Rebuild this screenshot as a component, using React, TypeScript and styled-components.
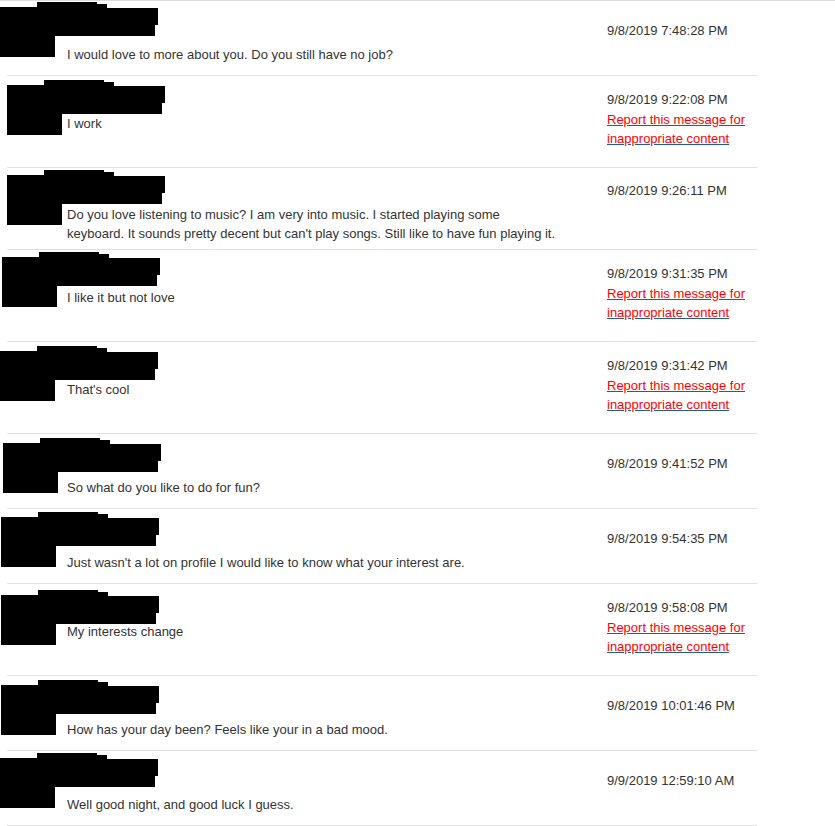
import React from "react";
import styled, { createGlobalStyle } from "styled-components";

type Variant = "plain" | "flagged" | "long";

interface Message {
  text: string;
  date: string;
  variant: Variant;
  flagged?: boolean;
  redact: { x: number; y: number };
}

const GlobalStyle = createGlobalStyle`
  html, body {
    margin: 0;
    padding: 0;
    background: #ffffff;
  }
  body {
    font-family: "Liberation Sans", Arial, sans-serif;
    font-size: 13px;
    color: #333333;
  }
`;

const sizes: Record<Variant, { pad: number; h: number }> = {
  plain: { pad: 20, h: 75 },
  flagged: { pad: 14, h: 92 },
  long: { pad: 13, h: 82 },
};

export const MessageList = styled.div`
  border-top: 1px solid #dcdcdc;
  width: 835px;
`;

export const MessageRow = styled.div<{ $variant: Variant }>`
  position: relative;
  display: flex;
  box-sizing: border-box;
  margin-left: 7px;
  width: 750px;
  min-height: ${(p) => sizes[p.$variant].h}px;
  padding-top: ${(p) => sizes[p.$variant].pad}px;
  border-bottom: 1px solid #e1e1e1;
`;

export const MessageBody = styled.div`
  flex: 1;
  padding-left: 60px;
`;

export const SenderName = styled.div`
  height: 24px;
`;

export const MessageText = styled.p`
  margin: 0;
  line-height: 19px;
  white-space: pre-line;
`;

export const MetaColumn = styled.div`
  width: 150px;
  line-height: 19.5px;
`;

export const DateText = styled.div`
  white-space: nowrap;
`;

export const ReportLink = styled.a`
  display: block;
  color: #ff0000;
  text-decoration: underline;
  text-decoration-color: #1d6283;
  cursor: pointer;
`;

export const Redaction = styled.svg`
  position: absolute;
  display: block;
`;

const shape =
  "0,5 37,5 37,0 97,0 97,2 107,2 107,6 158,6 158,23 155,23 155,34 55,34 55,55 0,55";

const messages: Message[] = [
  { text: "I would love to more about you. Do you still have no job?", date: "9/8/2019 7:48:28 PM", variant: "plain", redact: { x: 0, y: 1 } },
  { text: "I work", date: "9/8/2019 9:22:08 PM", variant: "flagged", flagged: true, redact: { x: 7, y: 4 } },
  {
    text: "Do you love listening to music? I am very into music. I started playing some\nkeyboard. It sounds pretty decent but can't play songs. Still like to have fun playing it.",
    date: "9/8/2019 9:26:11 PM",
    variant: "long",
    redact: { x: 7, y: 2 },
  },
  { text: "I like it but not love", date: "9/8/2019 9:31:35 PM", variant: "flagged", flagged: true, redact: { x: 2, y: 2 } },
  { text: "That's cool", date: "9/8/2019 9:31:42 PM", variant: "flagged", flagged: true, redact: { x: 0, y: 4 } },
  { text: "So what do you like to do for fun?", date: "9/8/2019 9:41:52 PM", variant: "plain", redact: { x: 3, y: 4 } },
  { text: "Just wasn't a lot on profile I would like to know what your interest are.", date: "9/8/2019 9:54:35 PM", variant: "plain", redact: { x: 1, y: 3 } },
  { text: "My interests change", date: "9/8/2019 9:58:08 PM", variant: "flagged", flagged: true, redact: { x: 1, y: 6 } },
  { text: "How has your day been? Feels like your in a bad mood.", date: "9/8/2019 10:01:46 PM", variant: "plain", redact: { x: 1, y: 4 } },
  { text: "Well good night, and good luck I guess.", date: "9/9/2019 12:59:10 AM", variant: "plain", redact: { x: 0, y: 2 } },
];

const App = () => {
  return (
    <>
      <GlobalStyle />
      <MessageList>
        {messages.map((m, i) => (
          <MessageRow key={i} $variant={m.variant}>
            <MessageBody>
              <SenderName />
              <MessageText>{m.text}</MessageText>
            </MessageBody>
            <MetaColumn>
              <DateText>{m.date}</DateText>
              {m.flagged && <ReportLink>Report this message for inappropriate content</ReportLink>}
            </MetaColumn>
            {/* sender name and photo blacked out */}
            <Redaction
              width="160"
              height="56"
              viewBox="0 0 160 56"
              style={{ left: m.redact.x - 7, top: m.redact.y }}
            >
              <polygon points={shape} fill="#000" />
            </Redaction>
          </MessageRow>
        ))}
      </MessageList>
    </>
  );
};

export default App;
